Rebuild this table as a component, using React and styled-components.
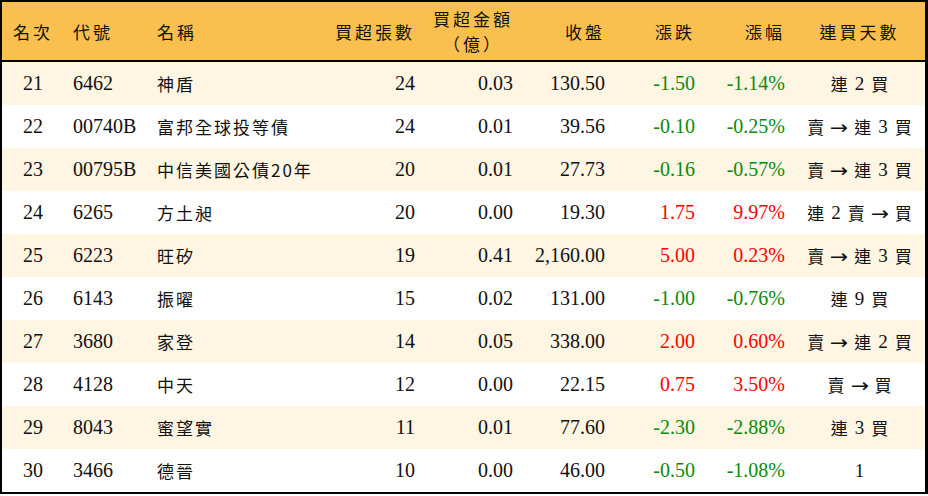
import React from 'react'
import styled, { createGlobalStyle } from 'styled-components'

const GlobalStyle = createGlobalStyle`
  html, body {
    margin: 0;
    padding: 0;
    background: #ffffff;
  }
`

const colors = {
  header: '#f9c04f',
  stripe: '#fef5e2',
  border: '#000000',
  up: '#ff0000',
  down: '#0b8a0b',
  text: '#111111',
}

const columns = [62, 84, 172, 104, 98, 92, 90, 90, 131]

const rows = [
  { rank: 21, code: '6462', name: '神盾', lots: 24, amount: '0.03', close: '130.50', change: '-1.50', pct: '-1.14%', streak: '連 2 買' },
  { rank: 22, code: '00740B', name: '富邦全球投等債', lots: 24, amount: '0.01', close: '39.56', change: '-0.10', pct: '-0.25%', streak: '賣 → 連 3 買' },
  { rank: 23, code: '00795B', name: '中信美國公債20年', lots: 20, amount: '0.01', close: '27.73', change: '-0.16', pct: '-0.57%', streak: '賣 → 連 3 買' },
  { rank: 24, code: '6265', name: '方土昶', lots: 20, amount: '0.00', close: '19.30', change: '1.75', pct: '9.97%', streak: '連 2 賣 → 買' },
  { rank: 25, code: '6223', name: '旺矽', lots: 19, amount: '0.41', close: '2,160.00', change: '5.00', pct: '0.23%', streak: '賣 → 連 3 買' },
  { rank: 26, code: '6143', name: '振曜', lots: 15, amount: '0.02', close: '131.00', change: '-1.00', pct: '-0.76%', streak: '連 9 買' },
  { rank: 27, code: '3680', name: '家登', lots: 14, amount: '0.05', close: '338.00', change: '2.00', pct: '0.60%', streak: '賣 → 連 2 買' },
  { rank: 28, code: '4128', name: '中天', lots: 12, amount: '0.00', close: '22.15', change: '0.75', pct: '3.50%', streak: '賣 → 買' },
  { rank: 29, code: '8043', name: '蜜望實', lots: 11, amount: '0.01', close: '77.60', change: '-2.30', pct: '-2.88%', streak: '連 3 買' },
  { rank: 30, code: '3466', name: '德晉', lots: 10, amount: '0.00', close: '46.00', change: '-0.50', pct: '-1.08%', streak: '1' },
]

const Table = styled.table`
  width: 928px;
  table-layout: fixed;
  border-collapse: separate;
  border-spacing: 0;
  border-style: solid;
  border-color: ${colors.border};
  border-width: 2px 3px 2px 2px;
  font-family: "Liberation Serif", "Noto Sans CJK TC", serif;
  color: ${colors.text};
`

const HeadRow = styled.tr`
  height: 60px;
  background: ${colors.header};
`

const HeadCell = styled.th`
  padding: 0 ${({ $align }) => ($align === 'center' ? '0' : '9px')};
  text-align: ${({ $align }) => $align || 'left'};
  border-bottom: 2px solid ${colors.border};
  font-family: "Noto Sans CJK TC", sans-serif;
  font-size: 17px;
  font-weight: 400;
  letter-spacing: 3px;
  line-height: 21px;
  vertical-align: middle;
`

const Stacked = styled.span`
  display: inline-flex;
  flex-direction: column;
  align-items: center;
  gap: 4px;
  line-height: 21px;
`

const BodyRow = styled.tr`
  height: 43px;
  background: ${({ $striped }) => ($striped ? colors.stripe : '#ffffff')};
`

const Cell = styled.td`
  padding: 0 ${({ $align }) => ($align === 'center' ? '0' : '9px')};
  text-align: ${({ $align }) => $align || 'left'};
  font-size: 20px;
  color: ${({ $tone }) => ($tone === 'up' ? colors.up : $tone === 'down' ? colors.down : colors.text)};
  vertical-align: middle;
  white-space: nowrap;
`

const Han = styled.span`
  font-family: "Noto Sans CJK TC", sans-serif;
  font-size: 17px;
  letter-spacing: 2px;
`

const Streak = styled.span`
  display: inline-flex;
  align-items: center;
  gap: 7px;
  font-size: 19px;
`

const Word = styled.span`
  font-family: "Noto Sans CJK TC", sans-serif;
  font-size: 17px;
`

const Arrow = styled.span`
  font-family: "DejaVu Sans", sans-serif;
  font-size: 19px;
  transform: scaleX(1.15);
`

const tone = (v) => (v.startsWith('-') ? 'down' : 'up')

const StreakText = ({ text }) => (
  <Streak>
    {text.split(' ').map((t, i) =>
      t === '→' ? <Arrow key={i}>→</Arrow> : /\d/.test(t) ? <span key={i}>{t}</span> : <Word key={i}>{t}</Word>
    )}
  </Streak>
)

export default function App() {
  return (
    <>
      <GlobalStyle />
      <Table>
        <colgroup>
          {columns.map((w, i) => (
            <col key={i} style={{ width: w }} />
          ))}
        </colgroup>
        <thead>
          <HeadRow>
            <HeadCell $align="center">名次</HeadCell>
            <HeadCell>代號</HeadCell>
            <HeadCell>名稱</HeadCell>
            <HeadCell $align="right">買超張數</HeadCell>
            <HeadCell $align="right">
              <Stacked><span>買超金額</span><span>（億）</span></Stacked>
            </HeadCell>
            <HeadCell $align="right">收盤</HeadCell>
            <HeadCell $align="right">漲跌</HeadCell>
            <HeadCell $align="right">漲幅</HeadCell>
            <HeadCell $align="center">連買天數</HeadCell>
          </HeadRow>
        </thead>
        <tbody>
          {rows.map((r, i) => (
            <BodyRow key={r.rank} $striped={i % 2 === 0}>
              <Cell $align="center">{r.rank}</Cell>
              <Cell>{r.code}</Cell>
              <Cell><Han>{r.name}</Han></Cell>
              <Cell $align="right">{r.lots}</Cell>
              <Cell $align="right">{r.amount}</Cell>
              <Cell $align="right">{r.close}</Cell>
              <Cell $align="right" $tone={tone(r.change)}>{r.change}</Cell>
              <Cell $align="right" $tone={tone(r.pct)}>{r.pct}</Cell>
              <Cell $align="center"><StreakText text={r.streak} /></Cell>
            </BodyRow>
          ))}
        </tbody>
      </Table>
    </>
  )
}
